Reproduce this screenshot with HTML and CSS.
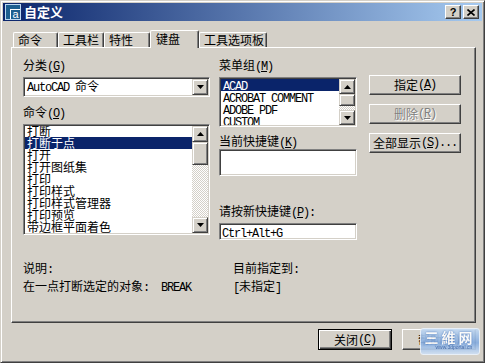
FILE: index.html
```html
<!DOCTYPE html>
<html lang="zh-CN">
<head>
    <meta charset="UTF-8">
    <meta name="viewport" content="width=device-width, initial-scale=1.0">
    <title>自定义</title>
    <link rel="stylesheet" href="styles.css">
</head>
<body>
<div class="window">
    <div class="titlebar">
        <span class="app-icon"><span class="app-a">a</span></span>
        <span class="title">自定义</span>
        <span class="caption-btns">
            <span class="cap-btn help">?</span>
            <span class="cap-btn close">
                <svg width="8" height="7" viewBox="0 0 8 7"><path d="M0.5 0.5 L7.5 6.5 M7.5 0.5 L0.5 6.5" stroke="#000" stroke-width="1.6"/></svg>
            </span>
        </span>
    </div>

    <div class="tabs">
        <div class="tab w45">命令</div>
        <div class="tab w46">工具栏</div>
        <div class="tab w46">特性</div>
        <div class="tab w49 active">键盘</div>
        <div class="tab w68">工具选项板</div>
    </div>

    <div class="panel">
        <div class="columns">
            <div class="col col-left">
                <div class="label">分类<span class="m">(<u>G</u>)</span></div>
                <div class="field combo">
                    <span class="combo-text"><span class="m">AutoCAD </span>命令</span>
                    <span class="sb"><svg width="7" height="4" viewBox="0 0 7 4"><path d="M0 0 H7 L3.5 4 Z"/></svg></span>
                </div>
                <div class="label mt8">命令<span class="m">(<u>O</u>)</span></div>
                <div class="field listbox cmd-list">
                    <div class="items shift">
                        <div class="item">打断</div>
                        <div class="item sel">打断于点</div>
                        <div class="item">打开</div>
                        <div class="item">打开图纸集</div>
                        <div class="item">打印</div>
                        <div class="item">打印样式</div>
                        <div class="item">打印样式管理器</div>
                        <div class="item">打印预览</div>
                        <div class="item">带边框平面着色</div>
                    </div>
                    <div class="scrollbar">
                        <span class="sb"><svg width="7" height="4" viewBox="0 0 7 4"><path d="M0 4 H7 L3.5 0 Z"/></svg></span>
                        <span class="thumb tall"></span>
                        <span class="track"></span>
                        <span class="sb"><svg width="7" height="4" viewBox="0 0 7 4"><path d="M0 0 H7 L3.5 4 Z"/></svg></span>
                    </div>
                </div>
            </div>

            <div class="col col-mid">
                <div class="label">菜单组<span class="m">(<u>M</u>)</span></div>
                <div class="field listbox group-list">
                    <div class="items">
                        <div class="item sel"><span class="m">ACAD</span></div>
                        <div class="item"><span class="m">ACROBAT COMMENT</span></div>
                        <div class="item"><span class="m">ADOBE PDF</span></div>
                        <div class="item"><span class="m">CUSTOM</span></div>
                    </div>
                    <div class="scrollbar">
                        <span class="sb small"><svg width="7" height="4" viewBox="0 0 7 4"><path d="M0 4 H7 L3.5 0 Z"/></svg></span>
                        <span class="thumb short"></span>
                        <span class="track"></span>
                        <span class="sb small"><svg width="7" height="4" viewBox="0 0 7 4"><path d="M0 0 H7 L3.5 4 Z"/></svg></span>
                    </div>
                </div>
                <div class="label mt7">当前快捷键<span class="m">(<u>K</u>)</span></div>
                <div class="field keys-box"></div>
                <div class="label mt28">请按新快捷键<span class="m">(<u>P</u>):</span></div>
                <div class="field input"><span class="m">Ctrl+Alt+G</span></div>
            </div>

            <div class="col col-right">
                <div class="btn">指定<span class="m">(<u>A</u>)</span></div>
                <div class="btn disabled">删除<span class="m">(<u>R</u>)</span></div>
                <div class="btn">全部显示<span class="m">(<u>S</u>)...</span></div>
            </div>
        </div>

        <div class="desc">
            <div class="desc-left">
                <div>说明<span class="m">:</span></div>
                <div>在一点打断选定的对象<span class="m">:  BREAK</span></div>
            </div>
            <div class="desc-right">
                <div>目前指定到<span class="m">:</span></div>
                <div><span class="m">[</span>未指定<span class="m">]</span></div>
            </div>
        </div>
    </div>

    <div class="actions">
        <div class="btn default">关闭<span class="m">(<u>C</u>)</span></div>
        <div class="btn">帮助<span class="m">(<u>H</u>)</span></div>
    </div>

    <div class="watermark">
        <div class="wm-title">三維网</div>
        <div class="wm-url">www.3dportal.cn</div>
    </div>
</div>
</body>
</html>
```

FILE: styles.css
```css
body {margin: 0; font: 12px "Noto Sans CJK SC", "Liberation Sans", sans-serif; color: #000; background: #d4d0c8;}

.m {font-family: "Liberation Mono", "DejaVu Sans Mono", monospace; font-size: 12px; letter-spacing: -1.2px; white-space: pre;}

.window {position: relative; width: 485px; height: 363px; box-sizing: border-box; background: #d4d0c8; border: 1px solid; border-color: #d4d0c8 #404040 #404040 #d4d0c8; box-shadow: inset 1px 1px #fff, inset -1px -1px #808080; padding: 2px; display: flex; flex-direction: column;}

/* title bar */
.titlebar {height: 18px; display: flex; align-items: center; padding: 0 3px 0 2px; background: linear-gradient(to right, #0a246a, #a6caf0);}
.app-icon {width: 16px; height: 16px; box-sizing: border-box; border: 1px solid #bcd8f2; background: #1d5f8f; display: flex; align-items: flex-end; justify-content: flex-end;}
.app-a {width: 10px; height: 10px; box-sizing: border-box; border: 1px solid #fff; border-right: 0; border-bottom: 0; color: #fff; font: 11px/9px "Liberation Sans", sans-serif; text-align: center;}
.title {margin-left: 3px; color: #fff; font-weight: bold; font-size: 13px; line-height: 18px;}
.caption-btns {margin-left: auto; display: flex; gap: 2px;}
.cap-btn {width: 16px; height: 14px; box-sizing: border-box; border: 1px solid; border-color: #fff #404040 #404040 #fff; box-shadow: inset -1px -1px #808080; background: #d4d0c8; display: flex; align-items: center; justify-content: center; font: bold 11px/12px "Liberation Sans", sans-serif;}

/* tabs */
.tabs {display: flex; align-items: flex-end; height: 18px; margin: 9px 0 0 10px; position: relative; z-index: 1;}
.tab {height: 15px; margin-bottom: 1px; box-sizing: border-box; border: 1px solid; border-color: #fff #404040 transparent #fff; border-bottom: 0; border-radius: 2px 2px 0 0; box-shadow: inset -1px 0 #808080; padding: 0 0 0 4px; line-height: 14px; white-space: nowrap;}
.tab.active {height: 18px; margin-bottom: 0; background: #d4d0c8; padding: 1px 0 0 5px;}
.w45 {width: 45px;}
.w46 {width: 46px;}
.w49 {width: 49px;}
.w68 {width: 68px;}

/* panel */
.panel {margin: -1px 0 0 8px; width: 465px; height: 276px; box-sizing: border-box; border: 1px solid; border-color: #fff #404040 #404040 #fff; box-shadow: inset -1px -1px #808080; padding: 10px 0 0 11px;}
.columns {display: flex; align-items: flex-start;}
.col {display: flex; flex-direction: column;}
.col-left {width: 187px;}
.col-mid {width: 138px; margin-left: 9px;}
.col-right {width: 92px; margin-left: 12px; padding-top: 17px;}

.label {height: 14px; line-height: 14px; white-space: nowrap;}
.mt7 {margin-top: 7px;}
.mt8 {margin-top: 8px;}
.mt28 {margin-top: 28px;}

/* sunken fields */
.field {box-sizing: border-box; background: #fff; border: 1px solid; border-color: #808080 #fff #fff #808080; box-shadow: inset 1px 1px #404040, inset -1px -1px #d4d0c8; padding: 1px;}
.combo {margin-top: 5px; height: 20px; display: flex; align-items: center;}
.combo-text {flex: 1; padding-left: 2px; line-height: 16px; white-space: nowrap;}
.keys-box {margin-top: 1px; height: 27px;}
.input {margin-top: 5px; height: 17px; padding: 1px 2px; line-height: 13px;}

.listbox {display: flex; overflow: hidden;}
.cmd-list {margin-top: 5px; height: 111px;}
.group-list {margin-top: 5px; height: 50px;}
.items {flex: 1; overflow: hidden;}
.items.shift > .item:first-child {margin-top: -1px;}
.item {height: 12px; line-height: 12px; padding-left: 2px; white-space: nowrap;}
.item.sel {background: #0a246a; color: #fff;}

/* scrollbar bits */
.scrollbar {width: 16px; display: flex; flex-direction: column;}
.sb {width: 16px; height: 16px; flex-shrink: 0; box-sizing: border-box; background: #d4d0c8; border: 1px solid; border-color: #d4d0c8 #404040 #404040 #d4d0c8; box-shadow: inset 1px 1px #fff, inset -1px -1px #808080; display: flex; align-items: center; justify-content: center;}
.sb.small {height: 15px;}
.thumb {flex-shrink: 0; box-sizing: border-box; background: #d4d0c8; border: 1px solid; border-color: #d4d0c8 #404040 #404040 #d4d0c8; box-shadow: inset 1px 1px #fff, inset -1px -1px #808080;}
.thumb.tall {height: 23px;}
.thumb.short {height: 12px;}
.track {flex: 1; background-color: #fff; background-image: conic-gradient(#d4d0c8 25%, #fff 0 50%, #d4d0c8 0 75%, #fff 0); background-size: 2px 2px;}

/* buttons */
.btn {box-sizing: border-box; height: 20px; margin-bottom: 9px; background: #d4d0c8; border: 1px solid; border-color: #fff #404040 #404040 #fff; box-shadow: inset -1px -1px #808080; display: flex; align-items: center; justify-content: center; line-height: 14px; white-space: nowrap;}
.btn.disabled {color: #808080; text-shadow: 1px 1px #fff;}
.btn.default {border-color: #000; box-shadow: inset 1px 1px #fff, inset -1px -1px #404040, inset -2px -2px #808080;}

/* description */
.desc {display: flex; margin-top: 20px; line-height: 15px;}
.desc-left {width: 210px;}

/* bottom row */
.actions {display: flex; justify-content: flex-end; gap: 10px; margin: 6px 6px 0 0;}
.actions .btn {width: 74px; height: 21px; margin: 0;}

/* watermark logo over the help button */
.watermark {position: absolute; left: 419px; top: 327px; width: 60px; height: 27px; box-sizing: border-box; border: 1px solid #eaf2fb; border-radius: 3px; background: linear-gradient(#c4daf3, #86ade0 55%, #cfe0f4); opacity: 0.92; text-align: center; overflow: hidden;}
.wm-title {font: bold 14px/16px "Noto Sans CJK SC", sans-serif; color: #fff; letter-spacing: 3px; text-shadow: 0 0 2px #3f6fb8;}
.wm-url {font: 10px/10px "Liberation Sans", sans-serif; color: #3a64a8; transform: scale(0.5); transform-origin: center top; white-space: nowrap;}
```
